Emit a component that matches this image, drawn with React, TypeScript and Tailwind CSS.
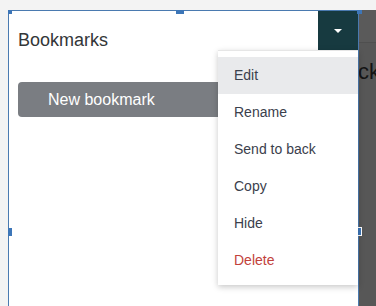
import React from 'react'

const items = ['Edit', 'Rename', 'Send to back', 'Copy', 'Hide']

const Handle = ({ className }: { className: string }) => (
  <div className={`absolute bg-[#3d76b8] ${className}`} />
)

const Menu = () => {
  return (
    <ul className="absolute left-[218px] top-[50px] w-[140px] bg-white py-[6px] shadow-[0_2px_6px_rgba(0,0,0,0.22)] border-t border-[#e6e6e6]">
      {items.map((item, i) => (
        <li
          key={item}
          className={`h-[37px] flex items-center pl-4 text-[14px] text-[#3b404c] ${i === 0 ? 'bg-[#e9eaec]' : ''}`}
        >
          {item}
        </li>
      ))}
      <li className="h-[37px] flex items-center pl-4 text-[14px] text-[#c2413b]">Delete</li>
    </ul>
  )
}

export default function App() {
  return (
    <div
      className="relative w-[376px] h-[306px] overflow-hidden bg-[#f3f3f3] pl-[8px] pt-[10px] flex"
      style={{ fontFamily: '"Liberation Sans", Arial, sans-serif' }}
    >
      {/* selected frame */}
      <div className="w-[351px] h-full bg-white border-l border-t border-r border-[#4a7ab0] flex flex-col">
        <div className="flex justify-between items-start">
          <h1 className="pl-[9px] mt-[17px] text-[18px] leading-6 text-[#333638]">Bookmarks</h1>
          <button className="w-[40px] h-[39px] bg-[#173a40] flex items-center justify-center">
            <span className="w-0 h-0 border-l-[4px] border-r-[4px] border-t-[4px] border-l-transparent border-r-transparent border-t-white" />
          </button>
        </div>
        <div className="mt-[30px] pl-[9px] pr-[18px]">
          <button className="w-full h-[35px] rounded-[4px] bg-[#7a7d82] text-white text-[16px] text-left pl-[30px]">
            New bookmark
          </button>
        </div>
      </div>

      {/* neighbouring panel */}
      <div className="flex-1 bg-[#575757] overflow-hidden">
        <div className="h-[33px] border-b border-[#4f4f4f] bg-[#5a5a5a]" />
        <div className="mt-[15px] text-[22px] leading-7 text-[#141414] whitespace-nowrap -ml-[1px]">ck</div>
      </div>

      <Handle className="left-[8px] top-[10px] w-[4px] h-[4px]" />
      <Handle className="left-[176px] top-[10px] w-[8px] h-[4px]" />
      <Handle className="left-[357px] top-[10px] w-[5px] h-[4px]" />
      <Handle className="left-[8px] top-[228px] w-[4px] h-[8px]" />
      <div className="absolute left-[357px] top-[227px] w-[5px] h-[9px] bg-[#3d76b8] border border-white" />

      <Menu />
    </div>
  )
}
